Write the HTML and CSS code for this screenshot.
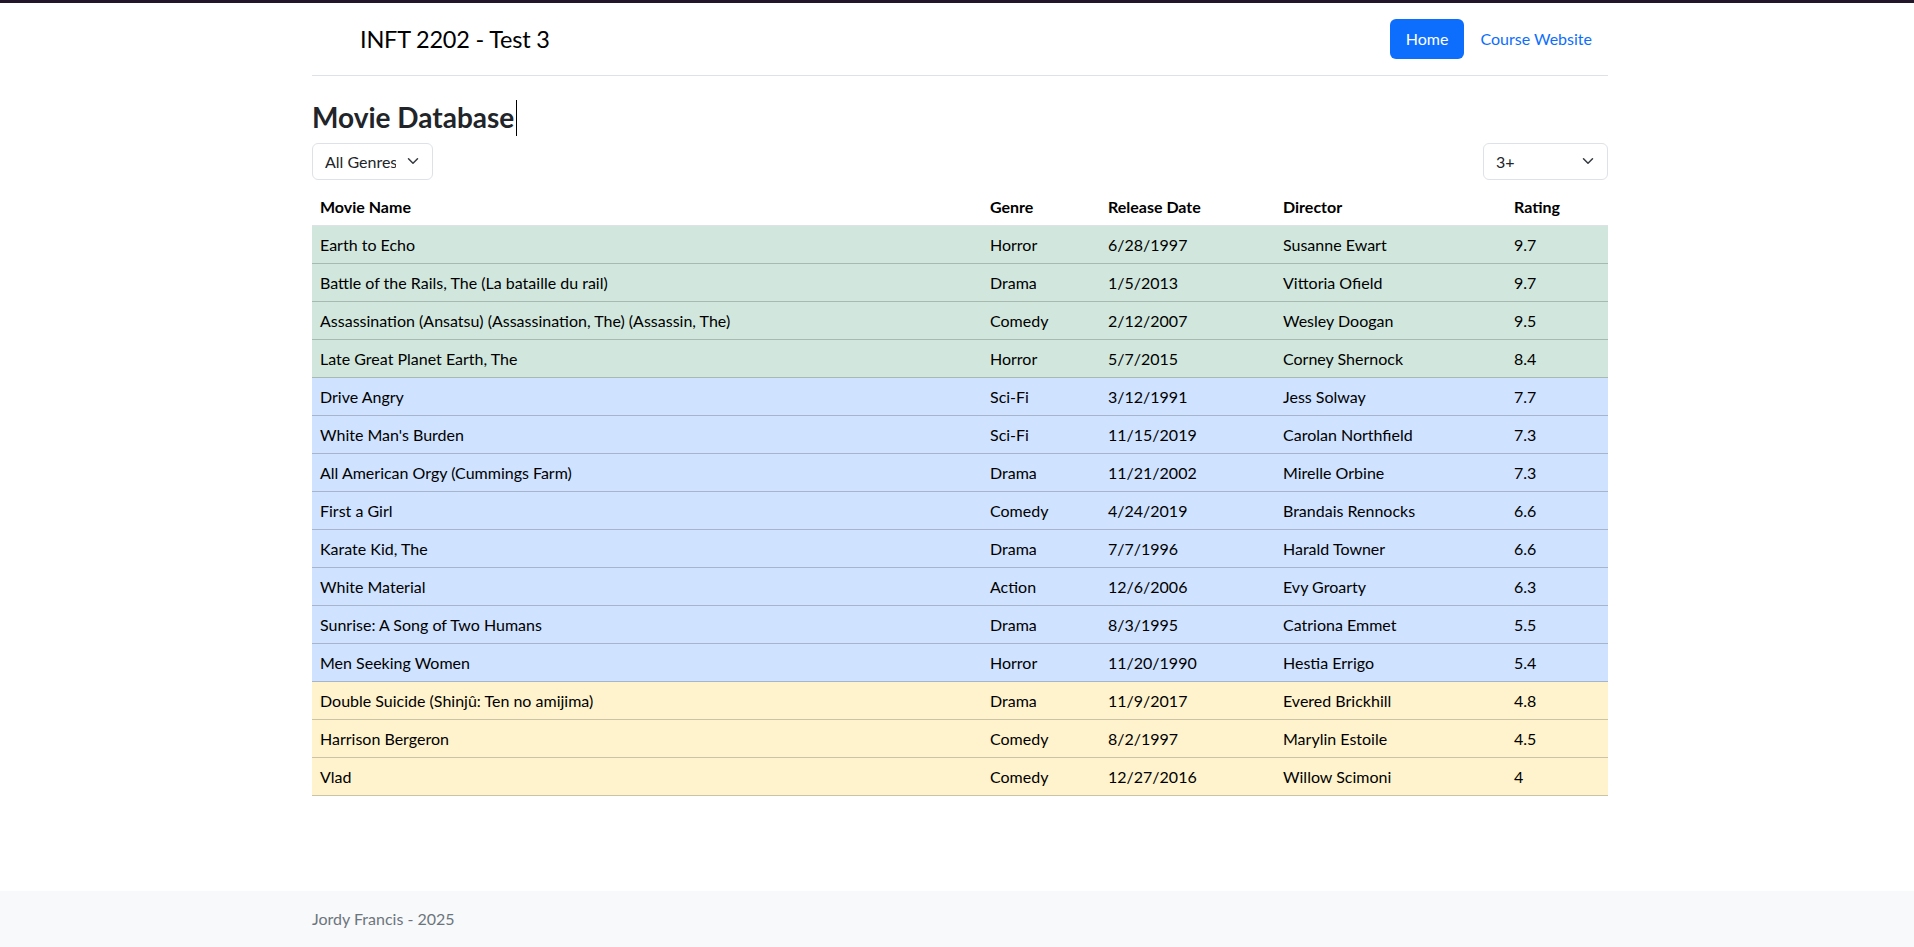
FILE: index.html
```html
<!DOCTYPE html>
<html lang="en">
<head>
<meta charset="utf-8">
<title>INFT 2202 - Test 3</title>
<link rel="stylesheet" href="styles.css">
</head>
<body>
<div class="topline"></div>
<div class="container">
  <header class="site-header">
    <a class="brand" href="#">
      <svg class="brand-icon" width="40" height="32" viewBox="0 0 40 32" aria-hidden="true"></svg>
      <span class="brand-text">INFT 2202 - Test 3</span>
    </a>
    <nav class="nav">
      <a class="nav-link active" href="#">Home</a>
      <a class="nav-link" href="#">Course Website</a>
    </nav>
  </header>
</div>

<main class="container main">
  <h3 class="page-title">Movie Database<span class="caret"></span></h3>
  <div class="filters">
    <div class="select-wrap genre">
      <select class="form-select">
        <option>All Genres</option>
        <option>Action</option>
        <option>Comedy</option>
        <option>Drama</option>
        <option>Horror</option>
        <option>Sci-Fi</option>
      </select>
      <svg class="chev" width="12" height="12" viewBox="0 0 16 16" aria-hidden="true"><path d="m2 5 6 6 6-6" fill="none" stroke="#343a40" stroke-width="2" stroke-linecap="round" stroke-linejoin="round"/></svg>
    </div>
    <div class="select-wrap rating">
      <select class="form-select">
        <option>3+</option>
      </select>
      <svg class="chev" width="12" height="12" viewBox="0 0 16 16" aria-hidden="true"><path d="m2 5 6 6 6-6" fill="none" stroke="#343a40" stroke-width="2" stroke-linecap="round" stroke-linejoin="round"/></svg>
    </div>
  </div>

  <table class="movies">
    <colgroup>
      <col class="c-name"><col class="c-genre"><col class="c-date"><col class="c-dir"><col class="c-rate">
    </colgroup>
    <thead>
      <tr><th>Movie Name</th><th>Genre</th><th>Release Date</th><th>Director</th><th>Rating</th></tr>
    </thead>
    <tbody>
      <tr class="row-success"><td>Earth to Echo</td><td>Horror</td><td>6/28/1997</td><td>Susanne Ewart</td><td>9.7</td></tr>
      <tr class="row-success"><td>Battle of the Rails, The (La bataille du rail)</td><td>Drama</td><td>1/5/2013</td><td>Vittoria Ofield</td><td>9.7</td></tr>
      <tr class="row-success"><td>Assassination (Ansatsu) (Assassination, The) (Assassin, The)</td><td>Comedy</td><td>2/12/2007</td><td>Wesley Doogan</td><td>9.5</td></tr>
      <tr class="row-success"><td>Late Great Planet Earth, The</td><td>Horror</td><td>5/7/2015</td><td>Corney Shernock</td><td>8.4</td></tr>
      <tr class="row-primary"><td>Drive Angry</td><td>Sci-Fi</td><td>3/12/1991</td><td>Jess Solway</td><td>7.7</td></tr>
      <tr class="row-primary"><td>White Man's Burden</td><td>Sci-Fi</td><td>11/15/2019</td><td>Carolan Northfield</td><td>7.3</td></tr>
      <tr class="row-primary"><td>All American Orgy (Cummings Farm)</td><td>Drama</td><td>11/21/2002</td><td>Mirelle Orbine</td><td>7.3</td></tr>
      <tr class="row-primary"><td>First a Girl</td><td>Comedy</td><td>4/24/2019</td><td>Brandais Rennocks</td><td>6.6</td></tr>
      <tr class="row-primary"><td>Karate Kid, The</td><td>Drama</td><td>7/7/1996</td><td>Harald Towner</td><td>6.6</td></tr>
      <tr class="row-primary"><td>White Material</td><td>Action</td><td>12/6/2006</td><td>Evy Groarty</td><td>6.3</td></tr>
      <tr class="row-primary"><td>Sunrise: A Song of Two Humans</td><td>Drama</td><td>8/3/1995</td><td>Catriona Emmet</td><td>5.5</td></tr>
      <tr class="row-primary"><td>Men Seeking Women</td><td>Horror</td><td>11/20/1990</td><td>Hestia Errigo</td><td>5.4</td></tr>
      <tr class="row-warning"><td>Double Suicide (Shinjû: Ten no amijima)</td><td>Drama</td><td>11/9/2017</td><td>Evered Brickhill</td><td>4.8</td></tr>
      <tr class="row-warning"><td>Harrison Bergeron</td><td>Comedy</td><td>8/2/1997</td><td>Marylin Estoile</td><td>4.5</td></tr>
      <tr class="row-warning"><td>Vlad</td><td>Comedy</td><td>12/27/2016</td><td>Willow Scimoni</td><td>4</td></tr>
    </tbody>
  </table>
</main>

<footer class="footer">
  <div class="container">
    <span class="footer-text">Jordy Francis - 2025</span>
  </div>
</footer>
</body>
</html>
```

FILE: styles.css
```css
* { box-sizing: border-box; }

html, body { height: 100%; }

body {
  margin: 0;
  min-height: 100vh;
  display: flex;
  flex-direction: column;
  font-family: "Lato", "Open Sans", "Liberation Sans", sans-serif;
  font-size: 16px;
  line-height: 1.5;
  color: #212529;
  background: #fff;
}

.topline {
  height: 3px;
  background: #22162a;
  flex: none;
}

.container {
  width: 1296px;
  margin-left: calc(50% - 645px);
}

.site-header {
  display: flex;
  align-items: center;
  justify-content: space-between;
  padding: 16px 0;
  border-bottom: 1px solid #dee2e6;
}

.brand {
  display: flex;
  align-items: center;
  text-decoration: none;
  color: #000;
}

.brand-icon {
  margin-right: 8px;
}

.brand-text {
  font-size: 23.5px;
  line-height: 36px;
  letter-spacing: -0.2px;
}

.nav {
  display: flex;
  align-items: center;
}

.nav-link {
  display: block;
  padding: 8px 16px;
  line-height: 24px;
  font-size: 16px;
  color: #0d6efd;
  text-decoration: none;
  border-radius: 6px;
}

.nav-link.active {
  background: #0d6efd;
  color: #fff;
}

.main {
  padding-top: 24px;
}

.page-title {
  margin: 0 0 7px;
  font-size: 28px;
  font-weight: 700;
  line-height: 34px;
  color: #212529;
}

.caret {
  display: inline-block;
  width: 1px;
  height: 36px;
  background: #000;
  vertical-align: -8px;
  margin-left: 2px;
}

.filters {
  display: flex;
  justify-content: space-between;
  align-items: center;
  margin-bottom: 8px;
}

.select-wrap {
  position: relative;
}

.select-wrap.genre { width: 121px; }
.select-wrap.rating { width: 125px; }

.form-select {
  display: block;
  width: 100%;
  height: 37px;
  padding: 6px 36px 6px 12px;
  font-family: inherit;
  font-size: 16px;
  line-height: 24px;
  color: #212529;
  background: #fff;
  border: 1px solid #dee2e6;
  border-radius: 6px;
  appearance: none;
  -webkit-appearance: none;
}

.chev {
  position: absolute;
  right: 14px;
  top: 12px;
  pointer-events: none;
}

.movies {
  width: 1296px;
  border-collapse: collapse;
  table-layout: fixed;
  margin-bottom: 16px;
}

.c-name { width: 670px; }
.c-genre { width: 118px; }
.c-date { width: 175px; }
.c-dir { width: 231px; }
.c-rate { width: 102px; }

.movies th,
.movies td {
  text-align: left;
  padding: 7px 8px 6px;
  line-height: 24px;
  white-space: nowrap;
  border-bottom: 1px solid #dee2e6;
}

.movies th {
  font-weight: 700;
  color: #000;
}

.movies td { color: #000; }

.row-success td {
  background: #d1e7dd;
  border-bottom-color: #a7b9b1;
}

.row-primary td {
  background: #cfe2ff;
  border-bottom-color: #a6b5cc;
}

.row-warning td {
  background: #fff3cd;
  border-bottom-color: #ccc2a4;
}

.footer {
  margin-top: auto;
  background: #f8f9fa;
  padding: 16px 0;
  flex: none;
}

.footer-text {
  color: #6c757d;
  line-height: 24px;
}
```
